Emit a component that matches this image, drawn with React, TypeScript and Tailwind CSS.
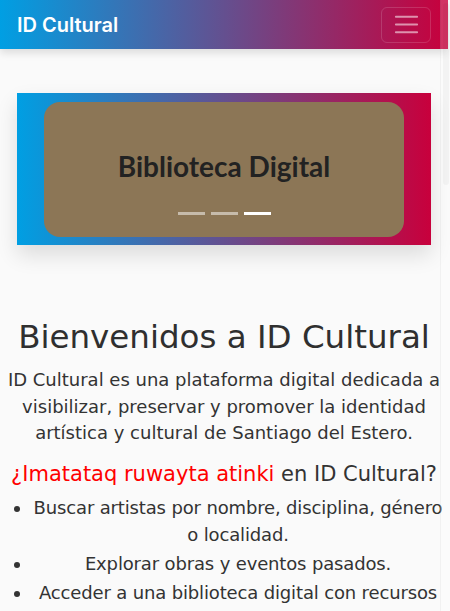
import React from "react";

const features = [
  "Buscar artistas por nombre, disciplina, género o localidad.",
  "Explorar obras y eventos pasados.",
  "Acceder a una biblioteca digital con recursos culturales.",
];

const App: React.FC = () => {
  return (
    <div className="relative h-[611px] overflow-hidden bg-[#fafafa] font-['DejaVu_Sans',sans-serif] text-[#333]">
      <div className="w-[448px]">
        {/* Navbar */}
        <nav className="relative z-10 flex h-[49px] items-center justify-between bg-[linear-gradient(to_right,#009fe3,#c8003c)] px-[17px] shadow-[0_4px_8px_rgba(0,0,0,0.12)]">
          <span className="font-['Inter',sans-serif] text-[20px] font-semibold text-white">
            ID Cultural
          </span>
          <button className="flex h-[36px] w-[50px] items-center justify-center rounded-md border border-white/15">
            <svg width="29" height="29" viewBox="0 0 30 30">
              <path
                d="M4 7h22M4 15h22M4 23h22"
                stroke="rgba(255,255,255,0.55)"
                strokeWidth="2"
                strokeLinecap="round"
              />
            </svg>
          </button>
        </nav>

        {/* Carousel */}
        <div className="mx-[17px] mt-[44px] h-[152px] bg-[linear-gradient(to_right,#009fe3,#c8003c)] px-[27px] pb-[8px] pt-[9px] shadow-[0_10px_20px_rgba(0,0,0,0.12)]">
          <div className="flex h-full flex-col items-center rounded-2xl bg-[#8c7656]">
            <h2 className="pt-[47px] font-['Lato',sans-serif] text-[28px] font-bold leading-[34px] text-[#222]">
              Biblioteca Digital
            </h2>
            <div className="mt-[29px] flex gap-[6px]">
              <span className="h-[3px] w-[27px] bg-white/50" />
              <span className="h-[3px] w-[27px] bg-white/50" />
              <span className="h-[3px] w-[27px] bg-white" />
            </div>
          </div>
        </div>

        {/* Welcome */}
        <section className="mt-[73px] px-1 text-center">
          <h1 className="text-[32.5px] leading-[38px] text-[#2f2f2f]">Bienvenidos a ID Cultural</h1>
          <p className="mt-[11px] text-[18px] leading-[26.5px]">
            ID Cultural es una plataforma digital dedicada a visibilizar, preservar y promover la
            identidad artística y cultural de Santiago del Estero.
          </p>
          <h3 className="mt-[15px] text-[21px] leading-[25px]">
            <span className="text-[#ff0000]">¿Imatataq ruwayta atinki</span> en ID Cultural?
          </h3>
          <ul className="mt-[7px] list-disc pl-7 text-[18px] leading-[27px] tracking-[-0.15px]">
            {features.map((f, i) => (
              <li key={i} className="mb-[2px]">
                {f}
              </li>
            ))}
          </ul>
        </section>
      </div>

      {/* Scrollbar */}
      <div className="absolute right-0 top-0 z-20 h-full w-[10px] border-l border-black/[0.04] bg-white/20">
        <div className="mx-auto mt-[3px] h-[182px] w-[6px] rounded-full bg-black/[0.03]" />
      </div>
    </div>
  );
};

export default App;
